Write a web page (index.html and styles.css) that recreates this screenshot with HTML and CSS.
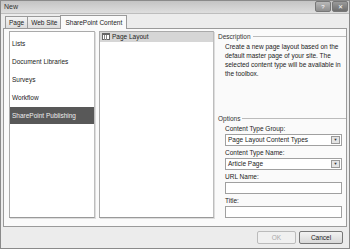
FILE: index.html
```html
<!DOCTYPE html>
<html>
<head>
    <title>New</title>
    <link rel="stylesheet" href="styles.css">
</head>
<body>
    <div class="window">
        <div class="titlebar">
            <span class="title">New</span>
            <div class="title-buttons">
                <span class="tbtn">?</span>
                <span class="tbtn close">&#x2715;</span>
            </div>
        </div>

        <div class="tabs">
            <span class="tab">Page</span>
            <span class="tab">Web Site</span>
            <span class="tab active">SharePoint Content</span>
        </div>

        <div class="panel">
            <ul class="list categories">
                <li>Lists</li>
                <li>Document Libraries</li>
                <li>Surveys</li>
                <li>Workflow</li>
                <li class="selected">SharePoint Publishing</li>
            </ul>

            <ul class="list items">
                <li class="current">
                    <svg class="icon" width="8" height="7" viewBox="0 0 8 7">
                        <rect x="0.5" y="0.5" width="7" height="6" fill="#fff" stroke="#666"/>
                        <line x1="2.5" y1="1" x2="2.5" y2="7" stroke="#888"/>
                        <line x1="4.5" y1="1" x2="4.5" y2="7" stroke="#888"/>
                        <line x1="0" y1="1.5" x2="8" y2="1.5" stroke="#666"/>
                    </svg>
                    Page Layout
                </li>
            </ul>

            <div class="details">
                <fieldset class="group description">
                    <legend>Description</legend>
                    <p>Create a new page layout based on the default master page of your site. The selected content type will be available in the toolbox.</p>
                </fieldset>

                <fieldset class="group options">
                    <legend>Options</legend>
                    <label>Content Type Group:</label>
                    <div class="select"><span>Page Layout Content Types</span><span class="arrow">&#9660;</span></div>
                    <label>Content Type Name:</label>
                    <div class="select"><span>Article Page</span><span class="arrow">&#9660;</span></div>
                    <label>URL Name:</label>
                    <div class="input"></div>
                    <label>Title:</label>
                    <div class="input"></div>
                </fieldset>
            </div>
        </div>

        <div class="footer">
            <button class="btn" disabled>OK</button>
            <button class="btn">Cancel</button>
        </div>
    </div>
</body>
</html>
```

FILE: styles.css
```css
body {
    margin: 0;
    font-family: "Liberation Sans", Arial, sans-serif;
    font-size: 6.5px;
    color: #222;
    background: #ececec;
}
.window {
    width: 350px;
    height: 249px;
    box-sizing: border-box;
    border: 1px solid #8a8a8a;
    background: #ececec;
    display: flex;
    flex-direction: column;
}
.titlebar {
    height: 12px;
    display: flex;
    align-items: center;
    justify-content: space-between;
    padding: 0 1px 0 3px;
    background: linear-gradient(to bottom, #c4c4c4, #dedede);
    border-bottom: 1px solid #bdbdbd;
}
.title {
    font-size: 7px;
    color: #333;
}
.title-buttons {
    display: flex;
    gap: 1px;
}
.tbtn {
    width: 14px;
    height: 9px;
    display: flex;
    align-items: center;
    justify-content: center;
    font-size: 6px;
    color: #fff;
    background: linear-gradient(to bottom, #b8b8b8, #8e8e8e);
    border: 1px solid #777;
    border-radius: 2px;
}
.tbtn.close {
    background: linear-gradient(to bottom, #9a9a9a, #6e6e6e);
}
.tabs {
    display: flex;
    align-items: flex-end;
    height: 15px;
    padding-left: 4px;
}
.tab {
    height: 11px;
    line-height: 11px;
    padding: 0 3px;
    border: 1px solid #9a9a9a;
    border-bottom: none;
    background: linear-gradient(to bottom, #f4f4f4, #dcdcdc);
    margin-right: -1px;
}
.tab.active {
    height: 13px;
    line-height: 13px;
    padding: 0 4px;
    background: #fafafa;
    position: relative;
    bottom: -1px;
}
.panel {
    flex: 1;
    margin: 0 2px;
    border: 1px solid #9a9a9a;
    background: #fafafa;
    display: flex;
    padding: 2px 0 8px 5px;
    gap: 4px;
}
.list {
    list-style: none;
    margin: 0;
    padding: 0;
    background: #fff;
    border: 1px solid #aaa;
    border-right-color: #bdbdbd;
    border-bottom-color: #999;
    box-shadow: 1px 1px 0 #ddd;
}
.categories {
    width: 84px;
    padding-top: 7px;
}
.categories li {
    height: 17px;
    line-height: 8px;
    padding: 1px 2px 0;
}
.categories li.selected {
    height: 16px;
    line-height: 16px;
    margin-top: -4px;
    background: #585858;
    color: #eee;
}
.items {
    width: 113px;
}
.items li.current {
    height: 10px;
    display: flex;
    align-items: center;
    gap: 2px;
    padding-left: 2px;
    background: #d6d6d6;
}
.details {
    flex: 1;
    display: flex;
    flex-direction: column;
}
.group {
    margin: 0;
    padding: 0 4px 0 7px;
    border: none;
    border-top: 1px solid #bbb;
    min-width: 0;
}
.group legend {
    padding: 0 2px 0 0;
    margin-left: -7px;
    color: #333;
}
.description {
    height: 78px;
    margin-top: 2px;
}
.description p {
    margin: 2px 0 0;
    line-height: 9px;
}
.options {
    margin-top: 3px;
}
.options label {
    display: block;
    margin-top: 3px;
    line-height: 8px;
}
.options label:first-of-type {
    margin-top: 3px;
}
.select, .input {
    height: 10px;
    margin-top: 1px;
    border: 1px solid #a0a0a0;
    background: #fff;
    display: flex;
    align-items: center;
    justify-content: space-between;
    padding-left: 2px;
}
.arrow {
    width: 9px;
    height: 8px;
    margin-right: 1px;
    font-size: 4px;
    display: flex;
    align-items: center;
    justify-content: center;
    color: #333;
    background: #e4e4e4;
    border: 1px solid #999;
    box-sizing: border-box;
}
.footer {
    height: 22px;
    display: flex;
    justify-content: flex-end;
    align-items: center;
    gap: 3px;
    padding-right: 6px;
}
.btn {
    width: 39px;
    height: 13px;
    padding: 0;
    font-family: "Liberation Sans", Arial, sans-serif;
    font-size: 6.5px;
    color: #222;
    border: 1px solid #777;
    border-radius: 2px;
    background: linear-gradient(to bottom, #f2f2f2, #d8d8d8);
}
.btn:disabled {
    color: #aaa;
    border-color: #bbb;
    background: #f0f0f0;
}
.btn + .btn {
    width: 44px;
}
```
